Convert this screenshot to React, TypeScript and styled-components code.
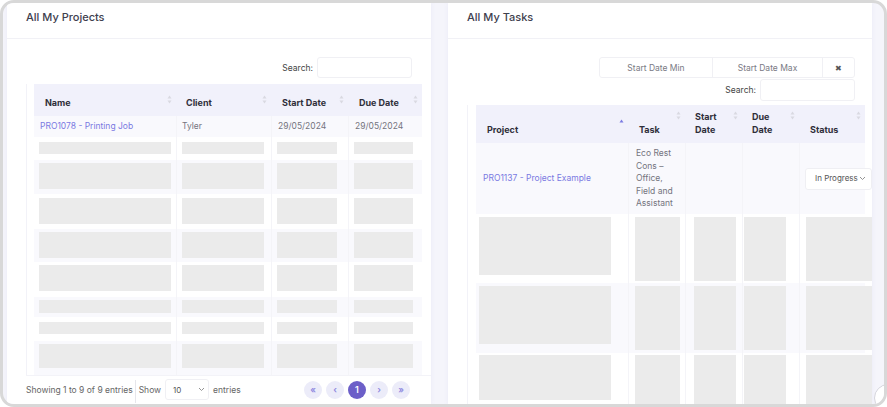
import React from "react";
import styled, { createGlobalStyle } from "styled-components";

const Global = createGlobalStyle`
  html, body { margin: 0; padding: 0; background: #fff; }
  body { width: 887px; height: 407px; overflow: hidden; font-family: Inter, "Noto Sans", sans-serif; }
  * { box-sizing: border-box; }
`;

const Frame = styled.div`
  position: relative;
  width: 887px;
  height: 407px;
  border: 3px solid #d8d8d8;
  border-radius: 14px;
  background: #f5f5fb;
  overflow: hidden;
  display: flex;
  gap: 17px;
  padding: 0 12px 0 4px;
`;

const Card = styled.section`
  width: 424px;
  flex: none;
  background: #fff;
  display: flex;
  flex-direction: column;
  box-shadow: 0 0 5px rgba(120, 120, 200, 0.08);
  overflow: hidden;
`;

const CardHeader = styled.header`
  height: 36px;
  flex: none;
  padding: 8px 19px 0;
  border-bottom: 1px solid #f1f1f6;
  font-size: 11px;
  line-height: 13px;
  font-weight: 500;
  color: #40404e;
`;

const CardBody = styled.div`
  flex: 1;
  display: flex;
  flex-direction: column;
  padding: 18px 0 0 19px;
  min-width: 0;
`;

const ControlRow = styled.div<{ $pr: number; $mt?: number; $h: number }>`
  display: flex;
  justify-content: flex-end;
  align-items: center;
  gap: 4px;
  height: ${(p) => p.$h}px;
  margin-top: ${(p) => p.$mt ?? 0}px;
  padding-right: ${(p) => p.$pr}px;
`;

const Label = styled.span`
  font-size: 8.5px;
  color: #444;
`;

const InputBox = styled.div`
  width: 95px;
  height: 100%;
  border: 1px solid #f0f0f4;
  border-radius: 3px;
  background: #fff;
`;

const DateFilter = styled.div`
  display: flex;
  height: 100%;
  border: 1px solid #f0f0f4;
  border-radius: 3px;
`;

const DateCell = styled.div<{ $w: number }>`
  width: ${(p) => p.$w}px;
  display: flex;
  align-items: center;
  justify-content: center;
  font-size: 8.5px;
  color: #7a7a84;
  & + & {
    border-left: 1px solid #f0f0f4;
  }
`;

const ClearX = styled.span`
  font-size: 8px;
  color: #555;
`;

const TableWrap = styled.div<{ $pl: number; $mt: number }>`
  margin-top: ${(p) => p.$mt}px;
  border-left: 1px solid #f2f2f8;
  padding-left: ${(p) => p.$pl}px;
`;

const TRow = styled.div<{ $cols: string; $h: number; $striped?: boolean; $head?: boolean }>`
  display: grid;
  width: max-content;
  grid-template-columns: ${(p) => p.$cols};
  height: ${(p) => p.$h}px;
  background: ${(p) => (p.$head ? "#f1f1fb" : p.$striped ? "#f9f9fd" : "transparent")};
`;

const Th = styled.div<{ $pl: number }>`
  position: relative;
  display: flex;
  align-items: flex-end;
  padding: 0 12px 7px ${(p) => p.$pl}px;
  font-size: 9px;
  font-weight: 700;
  color: #2f2f3a;
  line-height: 13px;
`;

const SortIcon = styled.svg<{ $top: number }>`
  position: absolute;
  right: 4px;
  top: ${(p) => p.$top}px;
  width: 5px;
  height: 9px;
`;

const Td = styled.div<{ $pl?: number; $center?: boolean }>`
  display: flex;
  flex-direction: column;
  justify-content: ${(p) => (p.$center ? "center" : "flex-start")};
  padding-left: ${(p) => p.$pl ?? 0}px;
  font-size: 8.5px;
  line-height: 12.5px;
  color: #74747e;
  white-space: nowrap;
  & + & {
    border-left: 1px solid #f4f4f8;
  }
`;

const Link = styled.span`
  color: #7a7ae2;
`;

const Skel = styled.div<{ $w: number; $h: number; $t: number; $l: number }>`
  width: ${(p) => p.$w}px;
  height: ${(p) => p.$h}px;
  margin: ${(p) => p.$t}px 0 0 ${(p) => p.$l}px;
  background: #ebebeb;
  flex: none;
`;

const StatusSelect = styled.div`
  width: 67px;
  height: 22px;
  margin-left: 5px;
  border: 1px solid #efeff3;
  border-radius: 3px;
  background: #fff;
  display: flex;
  align-items: center;
  justify-content: space-between;
  padding: 0 5px 0 9px;
  font-size: 8px;
  color: #555;
`;

const Footer = styled.div`
  height: 28px;
  flex: none;
  border-top: 1px solid #f3f3f8;
  display: flex;
  align-items: center;
  padding-right: 21px;
  font-size: 8.5px;
  color: #666;
`;

const Divider = styled.div`
  align-self: flex-end;
  width: 1px;
  height: 23px;
  background: #e6e6eb;
  margin: 0 3px 0 2px;
`;

const SizeSelect = styled.div`
  width: 44px;
  height: 21px;
  margin: 0 4px;
  border: 1px solid #f0f0f4;
  border-radius: 3px;
  display: flex;
  align-items: center;
  justify-content: space-between;
  padding: 0 3px 0 7px;
  color: #555;
  font-size: 8px;
`;

const Pager = styled.div`
  margin-left: auto;
  display: flex;
  gap: 4px;
`;

const PageBtn = styled.div<{ $active?: boolean }>`
  width: 18px;
  height: 18px;
  border-radius: 50%;
  background: ${(p) => (p.$active ? "#6c5fc8" : "#ececf9")};
  color: ${(p) => (p.$active ? "#fff" : "#8c86de")};
  font-size: 9px;
  font-weight: 600;
  display: flex;
  align-items: center;
  justify-content: center;
`;

const Fab = styled.div`
  position: absolute;
  left: 871px;
  top: 381px;
  width: 28px;
  height: 28px;
  border-radius: 50%;
  background: #fff;
  border: 1px solid #d4d4dc;
`;

const Chevron = () => (
  <svg width="7" height="5" viewBox="0 0 7 5">
    <path d="M1 1l2.5 2.5L6 1" fill="none" stroke="#888" strokeWidth="0.9" />
  </svg>
);

const Sort = ({ top }: { top: number }) => (
  <SortIcon $top={top} viewBox="0 0 5 9">
    <path d="M2.5 0.5L4.5 3.5H0.5Z" fill="#d9d9e1" />
    <path d="M2.5 8.5L4.5 5.5H0.5Z" fill="#d9d9e1" />
  </SortIcon>
);

const SortAsc = ({ top }: { top: number }) => (
  <SortIcon $top={top} viewBox="0 0 5 9">
    <path d="M2.5 0.5L4.5 3.5H0.5Z" fill="#7a7ae2" />
  </SortIcon>
);

/* ---------- left table data ---------- */
const leftCols = "142px 95px 77px 74px";
const leftSkelCols = [
  { w: 132, l: 5 },
  { w: 82, l: 5 },
  { w: 60, l: 5 },
  { w: 59, l: 5 },
];
const leftRows = [
  { h: 23, t: 5, bh: 12 },
  { h: 34, t: 3, bh: 26 },
  { h: 35, t: 4, bh: 26 },
  { h: 33, t: 3, bh: 26 },
  { h: 35, t: 3, bh: 26 },
  { h: 20, t: 3, bh: 13 },
  { h: 24, t: 5, bh: 12 },
  { h: 34, t: 3, bh: 24 },
];

/* ---------- right table data ---------- */
const rightCols = "152px 57px 57px 57px 66px";
const rightSkelCols = [
  { w: 132, l: 3 },
  { w: 45, l: 6 },
  { w: 42, l: 8 },
  { w: 42, l: 1 },
  { w: 66, l: 6 },
];
const rightRows = [
  { h: 69, t: 3, ph: 58, bh: 64 },
  { h: 70, t: 3, ph: 58, bh: 64 },
  { h: 60, t: 2, ph: 45, bh: 60 },
];

export default function App() {
  return (
    <>
      <Global />
      <Frame>
        <Card>
          <CardHeader>All My Projects</CardHeader>
          <CardBody>
            <ControlRow $pr={19} $h={21}>
              <Label>Search:</Label>
              <InputBox />
            </ControlRow>
            <TableWrap $pl={7} $mt={6}>
              <TRow $cols={leftCols} $h={32} $head>
                <Th $pl={11}>Name<Sort top={11} /></Th>
                <Th $pl={10}>Client<Sort top={11} /></Th>
                <Th $pl={11}>Start Date<Sort top={11} /></Th>
                <Th $pl={11}>Due Date<Sort top={11} /></Th>
              </TRow>
              <TRow $cols={leftCols} $h={21} $striped>
                <Td $pl={6} $center><Link>PRO1078 - Printing Job</Link></Td>
                <Td $pl={5} $center>Tyler</Td>
                <Td $pl={6} $center>29/05/2024</Td>
                <Td $pl={6} $center>29/05/2024</Td>
              </TRow>
              {leftRows.map((r, i) => (
                <TRow key={i} $cols={leftCols} $h={r.h} $striped={i % 2 === 1}>
                  {leftSkelCols.map((c, j) => (
                    <Td key={j}>
                      <Skel $w={c.w} $h={r.bh} $t={r.t} $l={c.l} />
                    </Td>
                  ))}
                </TRow>
              ))}
            </TableWrap>
            <Footer>
              <span>Showing 1 to 9 of 9 entries</span>
              <Divider />
              <span>Show</span>
              <SizeSelect>
                <span>10</span>
                <Chevron />
              </SizeSelect>
              <span>entries</span>
              <Pager>
                <PageBtn>«</PageBtn>
                <PageBtn>‹</PageBtn>
                <PageBtn $active>1</PageBtn>
                <PageBtn>›</PageBtn>
                <PageBtn>»</PageBtn>
              </Pager>
            </Footer>
          </CardBody>
        </Card>

        <Card>
          <CardHeader>All My Tasks</CardHeader>
          <CardBody>
            <ControlRow $pr={17} $h={21}>
              <DateFilter>
                <DateCell $w={112}>Start Date Min</DateCell>
                <DateCell $w={110}>Start Date Max</DateCell>
                <DateCell $w={32}><ClearX>✖</ClearX></DateCell>
              </DateFilter>
            </ControlRow>
            <ControlRow $pr={17} $h={22} $mt={1}>
              <Label>Search:</Label>
              <InputBox />
            </ControlRow>
            <TableWrap $pl={8} $mt={4}>
              <TRow $cols={rightCols} $h={38} $head>
                <Th $pl={11}>Project<SortAsc top={14} /></Th>
                <Th $pl={11}>Task<Sort top={6} /></Th>
                <Th $pl={10}>Start<br />Date<Sort top={6} /></Th>
                <Th $pl={10}>Due<br />Date<Sort top={6} /></Th>
                <Th $pl={11}>Status<Sort top={6} /></Th>
              </TRow>
              <TRow $cols={rightCols} $h={71} $striped>
                <Td $pl={7} $center><Link>PRO1137 - Project Example</Link></Td>
                <Td $pl={7} $center>
                  <span>Eco Rest</span>
                  <span>Cons –</span>
                  <span>Office,</span>
                  <span>Field and</span>
                  <span>Assistant</span>
                </Td>
                <Td />
                <Td />
                <Td $center>
                  <StatusSelect>
                    <span>In Progress</span>
                    <Chevron />
                  </StatusSelect>
                </Td>
              </TRow>
              {rightRows.map((r, i) => (
                <TRow key={i} $cols={rightCols} $h={r.h} $striped={i % 2 === 1}>
                  {rightSkelCols.map((c, j) => (
                    <Td key={j}>
                      <Skel $w={c.w} $h={j === 0 ? r.ph : r.bh} $t={r.t} $l={c.l} />
                    </Td>
                  ))}
                </TRow>
              ))}
            </TableWrap>
          </CardBody>
        </Card>
        <Fab />
      </Frame>
    </>
  );
}
